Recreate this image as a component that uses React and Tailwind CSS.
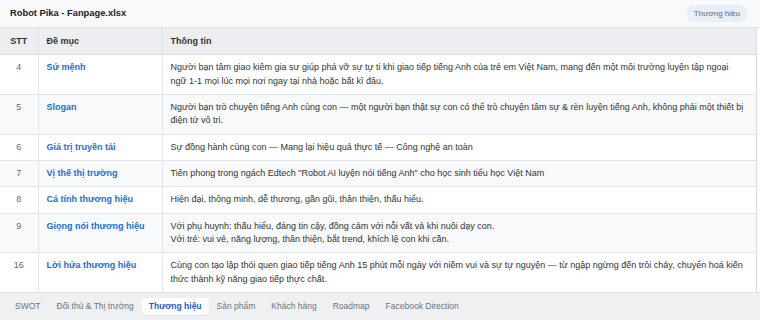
import React from "react";

const rows = [
  { n: "4", t: "Sứ mệnh", d: ["Người bạn tâm giao kiêm gia sư giúp phá vỡ sự tự ti khi giao tiếp tiếng Anh của trẻ em Việt Nam, mang đến một môi trường luyện tập ngoại", "ngữ 1-1 mọi lúc mọi nơi ngay tại nhà hoặc bất kì đâu."] },
  { n: "5", t: "Slogan", d: ["Người bạn trò chuyện tiếng Anh cùng con — một người bạn thật sự con có thể trò chuyện tâm sự & rèn luyện tiếng Anh, không phải một thiết bị", "điện tử vô tri."] },
  { n: "6", t: "Giá trị truyền tải", d: ["Sự đồng hành cùng con — Mang lại hiệu quả thực tế — Công nghệ an toàn"] },
  { n: "7", t: "Vị thế thị trường", d: ["Tiên phong trong ngách Edtech \"Robot AI luyện nói tiếng Anh\" cho học sinh tiểu học Việt Nam"] },
  { n: "8", t: "Cá tính thương hiệu", d: ["Hiện đại, thông minh, dễ thương, gần gũi, thân thiện, thấu hiểu."] },
  { n: "9", t: "Giọng nói thương hiệu", d: ["Với phụ huynh: thấu hiểu, đáng tin cậy, đồng cảm với nỗi vất vả khi nuôi dạy con.", "Với trẻ: vui vẻ, năng lượng, thân thiện, bắt trend, khích lệ con khi cần."] },
  { n: "16", t: "Lời hứa thương hiệu", d: ["Cùng con tạo lập thói quen giao tiếp tiếng Anh 15 phút mỗi ngày với niềm vui và sự tự nguyện — từ ngập ngừng đến trôi chảy, chuyển hoá kiến", "thức thành kỹ năng giao tiếp thực chất."] },
];

const tabs = ["SWOT", "Đối thủ & Thị trường", "Thương hiệu", "Sản phẩm", "Khách hàng", "Roadmap", "Facebook Direction"];

export default function App() {
  return (
    <div
      className="w-[760px] h-[320px] overflow-hidden bg-white flex flex-col text-[9px] leading-[13.33px] text-[#333]"
      style={{ fontFamily: '"Liberation Sans", Arial, sans-serif' }}
    >
      <div className="h-[28px] shrink-0 flex items-center justify-between pl-[10px] pr-[12px] bg-[#f8f9fa] border-b border-[#dee2e6]">
        <div className="font-bold text-[#222] text-[9.33px]">Robot Pika - Fanpage.xlsx</div>
        <div className="rounded-full bg-[#e9eefb] text-[#5f6873] text-[8px] leading-[11px] px-[8px] py-[3px]">Thương hiệu</div>
      </div>
      <div className="flex-1 w-[757px] border-r border-[#d6d9dd] overflow-hidden">
        <table className="w-full border-collapse table-fixed">
          <colgroup>
            <col className="w-[38px]" />
            <col className="w-[124px]" />
            <col />
          </colgroup>
          <thead>
            <tr className="bg-[#eceef1] border-b border-[#d6d9dd]">
              <th className="py-[6.5px] px-0 text-center font-bold text-[#333] border-r border-[#dee2e6]">STT</th>
              <th className="py-[6.5px] px-[8px] text-left font-bold text-[#333] border-r border-[#dee2e6]">Đề mục</th>
              <th className="py-[6.5px] px-[8px] text-left font-bold text-[#333]">Thông tin</th>
            </tr>
          </thead>
          <tbody>
            {rows.map((r, i) => (
              <tr key={r.n} className={`border-b border-[#e3e6e9] ${i % 2 === 1 ? "bg-[#f8f9fa]" : "bg-white"}`}>
                <td className="py-[6px] px-0 text-center align-top text-[#666] border-r border-[#e3e6e9]">{r.n}</td>
                <td className="py-[6px] px-[8px] align-top font-bold text-[#1a6fd6] border-r border-[#e3e6e9]">{r.t}</td>
                <td className="py-[6px] pl-[8px] pr-[4px] align-top text-[#333]">
                  {r.d.map((line, j) => (
                    <div key={j} className="whitespace-nowrap">{line}</div>
                  ))}
                </td>
              </tr>
            ))}
          </tbody>
        </table>
      </div>
      <div className="h-[28px] shrink-0 bg-[#eef0f2] border-t border-[#dee2e6] flex items-center pl-[7px] text-[8.5px]">
        {tabs.map((t) => (
          <div
            key={t}
            className={
              t === "Thương hiệu"
                ? "px-[7px] py-[2px] rounded-[4px] bg-white font-bold text-[#1a5fc8] shadow-[0_1px_1px_rgba(0,0,0,0.05)]"
                : "px-[8px] py-[2px] text-[#6c757d]"
            }
          >
            {t}
          </div>
        ))}
      </div>
    </div>
  );
}
